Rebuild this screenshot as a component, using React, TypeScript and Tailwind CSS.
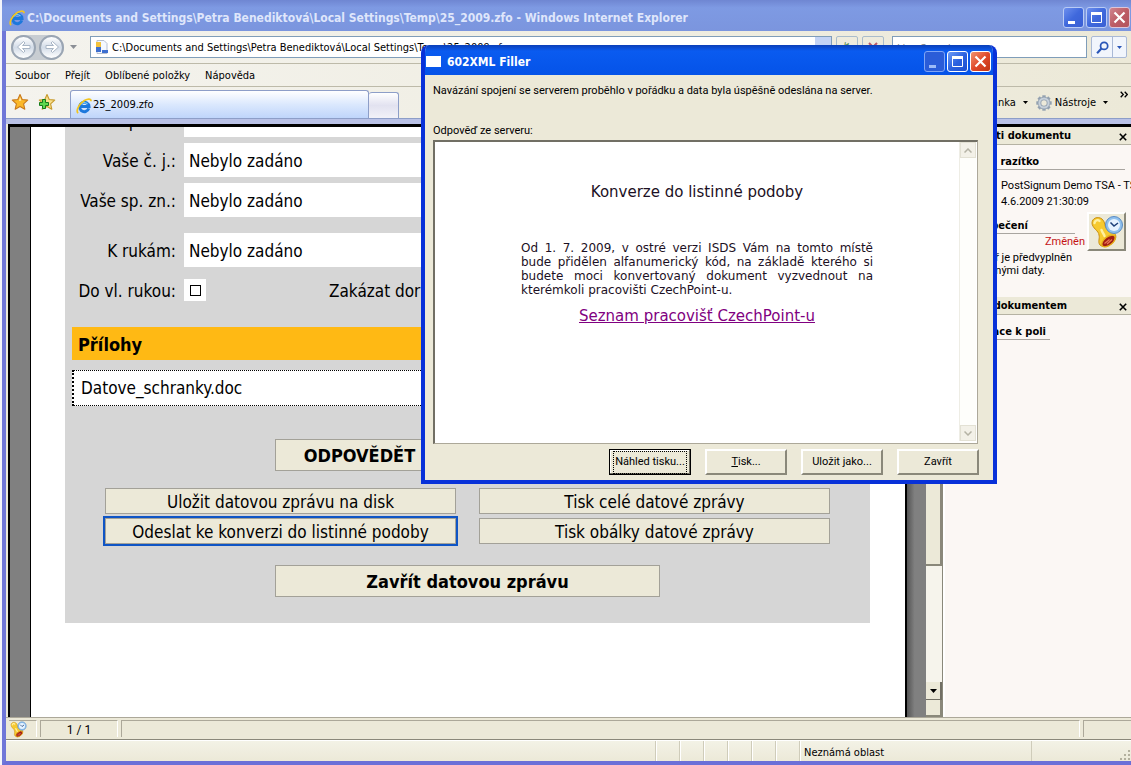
import type { ReactNode } from 'react';

const ui = "font-['DejaVu_Sans_Condensed','DejaVu_Sans',sans-serif]";
const sys = "font-['Roboto','Liberation_Sans',sans-serif]";

function IeLogo({ className }: { className: string }) {
  return (
    <svg viewBox="0 0 16 16" className={className} aria-hidden="true">
      <path d="M12.800 10.400A4.700 4.700 0 1 1 13 8.600H5.200" fill="none" stroke="#1d78dc" strokeWidth="3" />
      <path d="M11.500 6.200A4.200 4.200 0 0 0 4.600 6.600" fill="none" stroke="#7cc8fa" strokeWidth="1.200" />
      <path d="M2.200 15.200C-.6 13 3.200 5.600 8.400 2.600 11.600.7 15.200.2 15 3.200" fill="none" stroke="#f3c51f" strokeWidth="1.700" />
    </svg>
  );
}

function StampIcon({ className }: { className: string }) {
  return (
    <svg viewBox="0 0 34 34" className={className} aria-hidden="true">
      <path d="M2 8C2 3 8 1 12 4c3 3 2.500 5 3.500 8 1.200 3 4.500 3.500 8 5.500 3.500 2 3 7-1 10.500-4 3.500-9 5-12.500 2-2.500-3 0-6.500-1-10C9 16 2 13 2 8Z" fill="#f6c92f" stroke="#c98f10" />
      <path d="M4.500 8C5 5 8 4.500 9.500 6M11.500 15c1 3 2.500 4 3 6" fill="none" stroke="#fff0a0" strokeWidth="2.400" strokeLinecap="round" />
      <ellipse cx="18.500" cy="26" rx="7.800" ry="4.200" transform="rotate(-38 18.500 26)" fill="#a31d12" stroke="#e8b01c" strokeWidth="1.300" />
      <path d="M14.500 28.500l5-4M17 29l5-4.500" stroke="#e87a5a" strokeWidth="1.200" />
      <circle cx="24" cy="10" r="8.500" fill="#8fc0ee" stroke="#5b8cc4" />
      <circle cx="24" cy="10" r="6" fill="#e6f3ff" />
      <path d="M20.500 7.500l3.500 3.500 4-3" fill="none" stroke="#1c3f78" strokeWidth="1.500" />
    </svg>
  );
}

function Star({ className, plus }: { className: string; plus?: boolean }) {
  return (
    <svg viewBox="0 0 18 18" className={className} aria-hidden="true">
      <path
        d="M9 1.500l2.200 5 5.500.6-4.100 3.700 1.200 5.400L9 13.400l-4.800 2.800 1.200-5.400L1.300 7.100l5.500-.6Z"
        fill={plus ? '#f7df8c' : '#fbb829'}
        stroke={plus ? '#c79a2c' : '#c9791b'}
        strokeWidth="1.100"
        strokeLinejoin="round"
      />
      {plus && <path d="M4.500 6.500h3v3h3v3h-3v3h-3v-3h-3v-3h3Z" fill="#5fd84e" stroke="#157a1b" />}
      {!plus && <path d="M9 4l1.300 3.500L8 8Z" fill="#fff0b8" />}
    </svg>
  );
}

function Gear() {
  const teeth = [0, 45, 90, 135, 180, 225, 270, 315];
  return (
    <svg viewBox="0 0 16 16" className="size-4" aria-hidden="true">
      {teeth.map((a) => (
        <rect key={a} x="6.300" y="0.300" width="3.400" height="4" fill="#93a1b0" transform={`rotate(${a} 8 8)`} />
      ))}
      <circle cx="8" cy="8" r="4.500" fill="none" stroke="#93a1b0" strokeWidth="3.600" />
      <circle cx="8" cy="8" r="4.600" fill="none" stroke="#c6d0da" strokeWidth="2" />
    </svg>
  );
}

function Caret({ className }: { className: string }) {
  return (
    <svg viewBox="0 0 7 4" className={className} aria-hidden="true">
      <path d="M0 0h7L3.500 4Z" fill="currentColor" />
    </svg>
  );
}

function Cross({ className }: { className: string }) {
  return (
    <svg viewBox="0 0 10 10" className={className} aria-hidden="true">
      <path d="M1 1l8 8M9 1L1 9" stroke="currentColor" strokeWidth="2" />
    </svg>
  );
}

function CaptionButtons({ active }: { active?: boolean }) {
  const base = 'grid size-[21px] place-items-center rounded-[3px] border';
  const blue = active
    ? 'border-white bg-linear-to-br from-[#6f9bf5] via-[#2c62e0] to-[#1d4fd0] text-white'
    : 'border-[#b9cbf5] bg-linear-to-br from-[#6d8fee] via-[#3f68dc] to-[#3a5fd4] text-white';
  const min = active ? 'border-[#7fa5f5] bg-[#2a5cd8] text-[#9dbbf8]' : blue;
  const red = active
    ? 'border-white bg-linear-to-br from-[#f0926f] via-[#e0492a] to-[#c23312] text-white'
    : 'border-[#dcc5d8] bg-linear-to-br from-[#cf8590] via-[#bd5d66] to-[#b3525c] text-white';
  return (
    <div className="flex gap-[2px]">
      <button aria-label="Minimalizovat" className={`${base} ${min}`}>
        <svg viewBox="0 0 19 19" className="size-[19px]"><path d="M4 13h7v3H4Z" fill="currentColor" /></svg>
      </button>
      <button aria-label="Maximalizovat" className={`${base} ${blue}`}>
        <svg viewBox="0 0 19 19" className="size-[19px]">
          <path d="M4.500 5h10v9.500h-10Z" fill="none" stroke="currentColor" />
          <path d="M4 4h11v3H4Z" fill="currentColor" />
        </svg>
      </button>
      <button aria-label="Zavřít okno" className={`${base} ${red}`}>
        <svg viewBox="0 0 19 19" className="size-[19px]">
          <path d="M4.500 4.500l10 10M14.500 4.500l-10 10" stroke="currentColor" strokeWidth="2.200" />
        </svg>
      </button>
    </div>
  );
}

function NavArrow({ back }: { back?: boolean }) {
  return (
    <button
      aria-label={back ? 'Zpět' : 'Vpřed'}
      className="grid size-[25px] place-items-center rounded-full border-2 border-[#9aa5b3] bg-linear-to-b from-white via-[#d3dce8] to-white"
    >
      <svg viewBox="0 0 18 18" className={back ? 'size-[18px]' : 'size-[18px] rotate-180'}>
        <path d="M2.500 9l6-5.500 1.500 1.500-2.500 2.500h7.500v3H7.500l2.500 2.500-1.500 1.500Z" fill="#fff" stroke="#a9b6c6" />
      </svg>
    </button>
  );
}

function Field({ id, label, value }: { id: string; label: string; value: string }) {
  return (
    <div className="flex items-center gap-2">
      <label htmlFor={id} className="w-[104px] shrink-0 pt-[3px] text-right whitespace-nowrap">{label}</label>
      <input id={id} readOnly defaultValue={value} className="h-[34px] min-w-0 flex-1 bg-white px-[5px] pt-[2px] outline-none" />
    </div>
  );
}

function FormButton({ children, className = '' }: { children: ReactNode; className?: string }) {
  return (
    <button className={`border border-[#a3a198] bg-[#ece9d8] ${className}`}>{children}</button>
  );
}

function PanelHeader({ children, width }: { children: ReactNode; width: string }) {
  return (
    <div className="flex h-[18px] items-center justify-between border-b border-[#b5b2a3] bg-[#ece9d8] pt-[2px] pr-1 font-bold">
      <h2 className={`text-right whitespace-nowrap ${width}`}>{children}</h2>
      <button aria-label="Zavřít panel"><Cross className="size-[8px]" /></button>
    </div>
  );
}

function DialogButton({ children, focused }: { children: ReactNode; focused?: boolean }) {
  return (
    <button
      className={
        focused
          ? 'h-[26px] w-[82px] border border-black p-px shadow-[inset_-1px_-1px_0_#716f64,inset_1px_1px_0_#fff]'
          : 'h-[26px] w-[82px] border-2 border-t-white border-r-[#8a887a] border-b-[#8a887a] border-l-white'
      }
    >
      <span className={focused ? 'mx-[2px] block border border-dotted border-black py-[2px] whitespace-nowrap' : 'whitespace-nowrap'}>{children}</span>
    </button>
  );
}

function Dialog() {
  return (
    <section
      role="dialog"
      aria-label="602XML Filler"
      className={`absolute top-[45px] left-[421px] flex h-[439px] w-[576px] flex-col overflow-hidden rounded-t-lg border-x-4 border-b-4 border-x-[#0831d9] border-b-[#0831d9] bg-[#ece9d8] text-[11px] ${sys}`}
    >
      <header className="-mx-1 flex h-[30px] shrink-0 items-center bg-linear-to-b from-[#0a3fb8] via-[#0a5bf0] via-20% to-[#0553e8] pt-[2px] pr-[6px] pl-1">
        <span className="ml-[1px] h-[11px] w-[15px] bg-white" />
        <h1 className={`ml-[6px] flex-1 pt-[2px] text-[12px] font-bold text-white ${ui}`}>602XML Filler</h1>
        <CaptionButtons active />
      </header>
      <div className="flex flex-1 flex-col px-2 pb-[6px]">
        <p className="mt-2 leading-4">Navázání spojení se serverem proběhlo v pořádku a data byla úspěšně odeslána na server.</p>
        <p className="mt-6 leading-4">Odpověď ze serveru:</p>
        <div className="mt-px mr-[7px] flex h-[304px] border-t-2 border-r border-b border-l-2 border-t-[#716f64] border-r-[#aca899] border-b-[#aca899] border-l-[#716f64] bg-white pr-px pb-[2px]">
          <div className="flex-1 pt-10 pl-[86px] font-['DejaVu_Sans',sans-serif] text-[#1c1024]">
            <div className="w-[352px]">
              <h2 className="text-center text-[15px] leading-5">Konverze do listinné podoby</h2>
              <p className="mt-[39px] text-justify text-[12px] leading-[14px]">
                Od 1. 7. 2009, v ostré verzi ISDS Vám na tomto místě bude přidělen alfanumerický kód, na základě kterého si budete moci konvertovaný dokument vyzvednout na kterémkoli pracovišti CzechPoint-u.
              </p>
              <p className="mt-[9px] text-center text-[15px] leading-5">
                <a href="#pracoviste" className="text-[#800080] underline">Seznam pracovišť CzechPoint-u</a>
              </p>
            </div>
          </div>
          <div className="flex w-[17px] flex-col justify-between border-l border-[#eeede5] bg-[#fefefb]">
            <button aria-label="Nahoru" className="grid h-4 place-items-center border border-[#e3e1d4] bg-[#f3f1e8]">
              <svg viewBox="0 0 8 5" className="h-[5px] w-2"><path d="M.5 4.500L4 1l3.500 3.500" fill="none" stroke="#b5b3a5" strokeWidth="1.500" /></svg>
            </button>
            <button aria-label="Dolů" className="grid h-4 place-items-center border border-[#e3e1d4] bg-[#f3f1e8]">
              <svg viewBox="0 0 8 5" className="h-[5px] w-2"><path d="M.5.5L4 4 7.500.5" fill="none" stroke="#b5b3a5" strokeWidth="1.500" /></svg>
            </button>
          </div>
        </div>
        <div className="mt-[5px] mr-[6px] flex justify-end gap-[14px]">
          <DialogButton focused>Náhled tisku...</DialogButton>
          <DialogButton><u>T</u>isk...</DialogButton>
          <DialogButton>Uložit jako...</DialogButton>
          <DialogButton>Zavřít</DialogButton>
        </div>
      </div>
    </section>
  );
}

export default function App() {
  return (
    <div className={`relative flex h-screen overflow-hidden bg-[#7b95de] text-[11px] text-black ${ui}`}>
      <div className="w-[2px] shrink-0 bg-[#f4f5fb]" />
      <div className="flex min-w-0 flex-1 flex-col rounded-tl-lg border-b-4 border-l-4 border-b-[#6b6fd8] border-l-[#7077d8] bg-[#ece9d8]">
        <header className="-ml-1 flex h-[31px] shrink-0 items-center bg-linear-to-b from-[#6f86d2] via-[#7e9ae3] via-25% to-[#7b95de] pt-[4px] pr-px pl-[7px]">
          <IeLogo className="size-4" />
          <h1 className="ml-[2px] flex-1 pt-px text-[12px] font-bold text-[#dfe6fb]">
            C:\Documents and Settings\Petra Benediktová\Local Settings\Temp\25_2009.zfo - Windows Internet Explorer
          </h1>
          <CaptionButtons />
        </header>

        <div className="flex h-[33px] shrink-0 items-center border-b border-[#bdbaa9] bg-linear-to-r from-[#f4f3ee] to-[#ece9d8] pr-1 pl-[5px]">
          <div className="flex gap-[3px] rounded-full bg-[#c8cdd2]"><NavArrow back /><NavArrow /></div>
          <Caret className="ml-[6px] h-1 w-[7px] text-[#8b8f96]" />
          <div className="ml-[13px] flex h-[22px] w-[742px] items-center border border-[#7f9db9] bg-white pl-1">
            <svg viewBox="0 0 12 14" className="size-[14px]" aria-hidden="true">
              <path d="M1 .5h7l3 3v10H1Z" fill="#f4f8ff" stroke="#b5bfd0" />
              <path d="M0 2h5v5H0Z" fill="#f2c23e" /><path d="M0 7h5v5H0Z" fill="#3d6fd0" /><path d="M6 10h6v3H6Z" fill="#3d6fd0" />
            </svg>
            <input
              aria-label="Adresa"
              readOnly
              defaultValue="C:\Documents and Settings\Petra Benediktová\Local Settings\Temp\25_2009.zfo"
              className="ml-[3px] min-w-0 flex-1 pt-[2px] outline-none"
            />
            <button aria-label="Zobrazit adresy" className="grid h-5 w-4 place-items-center bg-[#c3d3f5] text-[#49618f]"><Caret className="h-1 w-[7px]" /></button>
          </div>
          <button aria-label="Aktualizovat" className="ml-1 h-[22px] w-[22px] rounded-[2px] border border-[#a9bccb] text-[#4d8a4d]">↯</button>
          <button aria-label="Zastavit" className="ml-1 grid h-[22px] w-[22px] place-items-center rounded-[2px] border border-[#a9bccb] text-[#b85a6a]"><Cross className="size-[10px]" /></button>
          <input aria-label="Hledat" placeholder="Live Search" className="ml-2 h-[22px] min-w-0 flex-1 border border-[#7f9db9] bg-white px-1 pt-[2px] outline-none" />
          <div className="ml-1 flex h-[22px] rounded-[2px] border border-[#a9b9d6] bg-[#f1f5fc] text-[#2a56b8]">
            <button aria-label="Vyhledat" className="grid w-[21px] place-items-center border-r border-[#a9b9d6]">
              <svg viewBox="0 0 12 12" className="size-[13px]"><circle cx="7.500" cy="4.500" r="3.300" fill="none" stroke="currentColor" strokeWidth="1.600" /><path d="M5 7L1 11.200" stroke="currentColor" strokeWidth="2" /></svg>
            </button>
            <button aria-label="Možnosti hledání" className="grid w-[13px] place-items-center"><Caret className="h-[3px] w-[5px]" /></button>
          </div>
        </div>

        <nav className="flex h-[23px] shrink-0 items-center gap-[15px] border-b border-[#bdbaa9] bg-linear-to-r from-[#f4f3ee] to-[#ece9d8] pt-[3px] pl-[9px]">
          <button>Soubor</button>
          <button>Přejít</button>
          <button>Oblíbené položky</button>
          <button>Nápověda</button>
        </nav>

        <div className="flex h-[32px] shrink-0 items-end border-b border-[#8d9ec8] bg-linear-to-r from-[#f4f3ee] to-[#ece9d8]">
          <button aria-label="Oblíbené" className="mb-[7px] ml-[5px]"><Star className="size-[18px]" /></button>
          <button aria-label="Přidat k oblíbeným" className="mb-[7px] ml-[9px]"><Star plus className="size-[18px]" /></button>
          <button className="ml-[14px] flex h-[28px] w-[299px] items-center gap-px rounded-t-[3px] border border-b-0 border-[#8d9ec8] bg-linear-to-b from-white via-[#dbe8fd] via-50% to-[#bfd5fb] pt-[2px] pl-[5px]">
            <IeLogo className="size-4" />25_2009.zfo
          </button>
          <button aria-label="Nová karta" className="h-[26px] w-[30px] rounded-t-[3px] border border-b-0 border-l-0 border-[#8d9ec8] bg-linear-to-b from-white via-[#e2e2f0] to-[#f2f2f8]" />
          <div className="mb-[7px] ml-auto flex items-center">
            <button className="flex items-center gap-[7px]">Stránka<Caret className="h-[3px] w-[5px]" /></button>
            <button className="ml-2 flex items-center gap-[3px]"><Gear />Nástroje<Caret className="ml-1 h-[3px] w-[5px]" /></button>
          </div>
          <button aria-label="Další příkazy" className="mr-[3px] mb-[20px] ml-3">
            <svg viewBox="0 0 8 7" className="h-[7px] w-2"><path d="M.7.7L3.300 3.500.7 6.300M4.700.7L7.300 3.500 4.700 6.300" fill="none" stroke="#000" strokeWidth="1.300" /></svg>
          </button>
        </div>
        <div className="h-[5px] shrink-0 bg-[#b9c1e6]" />

        <main className="ml-[2px] flex min-h-0 flex-1 border-t-[3px] border-l-2 border-t-black border-l-black bg-white">
          <div className="flex min-w-0 flex-1 bg-[#808080] pl-[20px]">
            <div className="min-w-0 flex-1 overflow-hidden border-r-2 border-l border-black bg-white pr-[35px] pl-[34px]">
              <form className="bg-[#d6d6d6] px-[7px] pb-[26px] text-[17px]">
                <div className="-mt-[24px] flex flex-col gap-[6px]">
                  <Field id="nase-zn" label="Naše sp. zn.:" value="" />
                  <Field id="vase-cj" label="Vaše č. j.:" value="Nebylo zadáno" />
                  <Field id="vase-zn" label="Vaše sp. zn.:" value="Nebylo zadáno" />
                </div>
                <div className="mt-4"><Field id="k-rukam" label="K rukám:" value="Nebylo zadáno" /></div>
                <div className="mt-3 flex h-[22px] items-center gap-2">
                  <label htmlFor="do-vl" className="w-[104px] pt-[3px] text-right whitespace-nowrap">Do vl. rukou:</label>
                  <span className="grid size-[22px] place-items-center bg-white">
                    <input id="do-vl" type="checkbox" className="size-[11px] appearance-none border border-black bg-white" />
                  </span>
                  <span className="ml-[115px] pt-[3px] whitespace-nowrap">Zakázat doručení fikcí:</span>
                </div>
                <h2 className="mt-[26px] flex h-[33px] items-center bg-[#ffb914] pt-px pl-[6px] text-[18px] font-bold">Přílohy</h2>
                <div className="mt-[10px] flex h-[36px] items-center border border-l-2 border-dotted border-black bg-white pt-[2px] pl-[7px]">Datove_schranky.doc</div>
                <div className="mx-auto mt-[33px] flex w-[385px] text-[18px] font-bold">
                  <FormButton className="h-8 flex-1 pt-px pr-3"><span className="whitespace-nowrap">ODPOVĚDĚT NA DATOVOU ZPRÁVU</span></FormButton>
                </div>
                <div className="mx-auto mt-[17px] grid w-[725px] grid-cols-2 gap-x-[23px] gap-y-1 leading-5">
                  <FormButton className="h-[26px] pt-px">Uložit datovou zprávu na disk</FormButton>
                  <FormButton className="h-[26px] pt-px">Tisk celé datové zprávy</FormButton>
                  <FormButton className="h-[26px] pt-px outline-2 outline-[#0f55c5]">Odeslat ke konverzi do listinné podoby</FormButton>
                  <FormButton className="h-[26px] pt-px">Tisk obálky datové zprávy</FormButton>
                </div>
                <div className="mx-auto mt-[21px] flex w-[385px] text-[18px] font-bold">
                  <FormButton className="h-8 flex-1">Zavřít datovou zprávu</FormButton>
                </div>
              </form>
            </div>
            <div className="w-[19px] bg-linear-to-r from-[#555] to-[#808080] to-40%" />
          </div>
          <div className="flex w-[17px] shrink-0 flex-col border-r border-[#8a887a] bg-[#f6f4ec]">
            <div className="h-[439px] border-r-2 border-b-2 border-[#8a887a] bg-[#ece9d8]" />
            <div className="flex-1" />
            <button aria-label="Posunout dolů" className="grid h-[18px] place-items-center border-r-2 border-b border-[#716f64] bg-[#ece9d8]"><Caret className="h-1 w-[7px]" /></button>
            <div className="h-[17px] border-r-2 border-b-2 border-[#8a887a] bg-[#ece9d8]" />
          </div>
          <aside className="w-[188px] shrink-0 overflow-hidden border-l-2 border-white bg-[#fbf7f4]">
            <PanelHeader width="w-[126px]">Vlastnosti dokumentu</PanelHeader>
            <div className="mt-[9px] mr-[6px] h-[16px] border-b border-[#a9a5a0] font-bold"><h3 className="w-[94px] text-right">Časové razítko</h3></div>
            <p className={`mt-[8px] pl-[56px] leading-4 whitespace-nowrap ${sys}`}>PostSignum Demo TSA - TS<br />4.6.2009 21:30:09</p>
            <div className="mt-[2px] flex gap-3 pr-[5px]">
              <div className="flex-1">
                <h3 className="mt-[6px] h-4 border-b border-[#a9a5a0] pr-[47px] text-right font-bold">Zabezpečení</h3>
                <p className={`-mr-[10px] text-right leading-4 text-[#c41414] ${sys}`}>Změněn</p>
              </div>
              <button aria-label="Razítko" className="grid size-[39px] place-items-center border-2 border-t-white border-r-[#8a887a] border-b-[#8a887a] border-l-white bg-[#ece9d8]"><StampIcon className="size-[34px]" /></button>
            </div>
            <p className={`w-[127px] text-right leading-[13px] whitespace-nowrap ${sys}`}>Formulář je předvyplněn</p>
            <p className={`w-[100px] text-right leading-[13px] whitespace-nowrap ${sys}`}>zpracovanými daty.</p>
            <div className="mt-5"><PanelHeader width="w-[122px]">Práce s dokumentem</PanelHeader></div>
            <h3 className="mt-[9px] h-[16px] w-[105px] border-b border-[#a9a5a0] pr-1 text-right font-bold whitespace-nowrap">Informace k poli</h3>
          </aside>
        </main>

        <div className="flex h-[23px] shrink-0 items-stretch gap-[3px] border-t border-b border-t-[#aca899] border-b-[#8a887a] bg-[#ece9d8] pt-[2px] pb-[2px] pl-[3px]">
          <div className="w-7 border-t border-r border-t-[#aca899] border-r-white pl-px"><StampIcon className="size-[17px]" /></div>
          <div className={`w-[78px] border-t border-r border-l border-t-[#aca899] border-r-white border-l-[#aca899] text-center text-[12px] ${sys}`}>1 / 1</div>
          <div className="flex-1 border-t border-r border-l border-t-[#aca899] border-r-white border-l-[#aca899]" />
          <div className="w-12 border-t border-l border-[#aca899]" />
        </div>
        <footer className="flex h-[21px] shrink-0 items-stretch border-t border-white bg-linear-to-b from-[#f3f2e6] to-[#ece9d8]">
          <div className="flex-1" />
          {[0, 1, 2, 3, 4, 5].map((n) => (
            <div key={n} className="w-6 border-l border-[#cfccba] shadow-[inset_1px_0_0_#fff]" />
          ))}
          <div className="w-[232px] border-l border-[#cfccba] pt-1 pl-1 leading-4 shadow-[inset_1px_0_0_#fff]">Neznámá oblast</div>
          <div className="flex w-[100px] items-end justify-end border-l border-[#cfccba]">
            <svg viewBox="0 0 12 12" className="size-3" aria-hidden="true">
              <path d="M9 1h2v2H9ZM5 5h2v2H5ZM9 5h2v2H9ZM1 9h2v2H1ZM5 9h2v2H5ZM9 9h2v2H9Z" fill="#b3b09e" />
            </svg>
          </div>
        </footer>
      </div>
      <Dialog />
    </div>
  );
}
